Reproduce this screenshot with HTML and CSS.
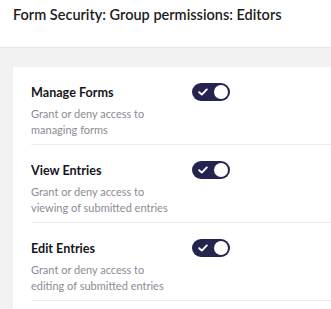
FILE: index.html
```html
<!DOCTYPE html>
<html>
<head>
<meta charset="utf-8">
<link rel="stylesheet" href="styles.css">
</head>
<body>
<header class="page-header">
  <h1 class="page-title">Form Security: Group permissions: Editors</h1>
</header>
<main class="content">
  <section class="card">
    <div class="perm-row">
      <div class="perm-text">
        <div class="perm-title">Manage Forms</div>
        <div class="perm-desc">Grant or deny access to<br>managing forms</div>
      </div>
      <div class="toggle on"><span class="check"><svg width="10" height="8" viewBox="0 0 10 8"><path d="M1.2 4.2 L3.8 6.6 L8.8 1.4" fill="none" stroke="#fff" stroke-width="1.9" stroke-linecap="round" stroke-linejoin="round"/></svg></span><span class="knob"></span></div>
    </div>
    <div class="perm-row">
      <div class="perm-text">
        <div class="perm-title">View Entries</div>
        <div class="perm-desc">Grant or deny access to<br>viewing of submitted entries</div>
      </div>
      <div class="toggle on"><span class="check"><svg width="10" height="8" viewBox="0 0 10 8"><path d="M1.2 4.2 L3.8 6.6 L8.8 1.4" fill="none" stroke="#fff" stroke-width="1.9" stroke-linecap="round" stroke-linejoin="round"/></svg></span><span class="knob"></span></div>
    </div>
    <div class="perm-row">
      <div class="perm-text">
        <div class="perm-title">Edit Entries</div>
        <div class="perm-desc">Grant or deny access to<br>editing of submitted entries</div>
      </div>
      <div class="toggle on"><span class="check"><svg width="10" height="8" viewBox="0 0 10 8"><path d="M1.2 4.2 L3.8 6.6 L8.8 1.4" fill="none" stroke="#fff" stroke-width="1.9" stroke-linecap="round" stroke-linejoin="round"/></svg></span><span class="knob"></span></div>
    </div>
  </section>
</main>
</body>
</html>
```
FILE: styles.css
```css
* { box-sizing: border-box; }
html, body { margin: 0; padding: 0; }
body {
  font-family: Lato, "Noto Sans", sans-serif;
  background: #f3f2f3;
  color: #1b1b1f;
  height: 309px;
  overflow: hidden;
}
.page-header {
  background: #fff;
  height: 48px;
  border-bottom: 1px solid #e6e5e7;
  padding: 5px 13px 0;
}
.page-title {
  margin: 0;
  font-size: 14.5px;
  font-weight: 600;
  line-height: 20px;
  color: #1d1d22;
}
.content {
  padding: 19px 0 0 13px;
}
.card {
  background: #fff;
  padding: 0 0 20px 18px;
}
.perm-row {
  display: flex;
  align-items: flex-start;
  padding: 17px 0 6px;
  border-bottom: 1px solid #ececee;
}
.perm-text {
  width: 161px;
}
.perm-title {
  font-size: 12.6px;
  font-weight: 700;
  line-height: 18px;
  color: #16161c;
  margin-bottom: 4px;
}
.perm-desc {
  font-size: 11px;
  line-height: 16px;
  color: #8b8b94;
}
.toggle {
  width: 38px;
  height: 18px;
  border-radius: 9px;
  background: #24244f;
  display: flex;
  align-items: center;
  justify-content: space-between;
  padding: 0 2px 0 6px;
  margin-top: -1px;
}
.check { display: flex; }
.knob {
  width: 14px;
  height: 14px;
  border-radius: 50%;
  background: #fff;
}
```
